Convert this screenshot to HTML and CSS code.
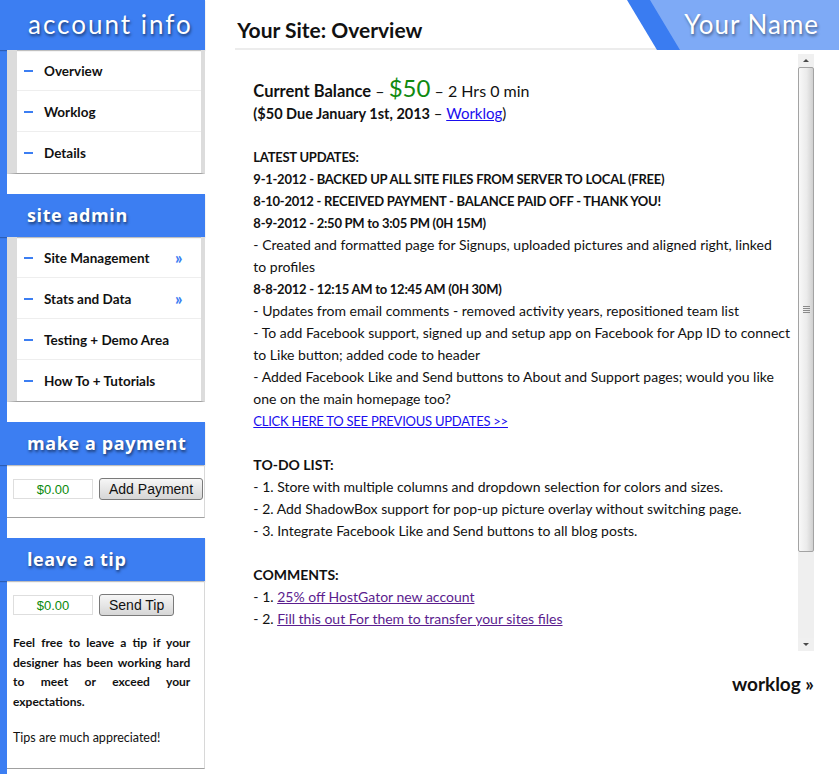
FILE: index.html
```html
<!DOCTYPE html>
<html>
<head>
<meta charset="utf-8">
<title>Your Site: Overview</title>
<link rel="stylesheet" href="styles.css">
</head>
<body>
<div class="page">
  <aside class="sidebar">
    <h2 class="side-head side-head-thin">account info</h2>
    <ul class="nav">
      <li><span class="dash"></span>Overview</li>
      <li><span class="dash"></span>Worklog</li>
      <li><span class="dash"></span>Details</li>
    </ul>

    <h2 class="side-head">site admin</h2>
    <ul class="nav">
      <li><span class="dash"></span>Site Management<span class="more">»</span></li>
      <li><span class="dash"></span>Stats and Data<span class="more">»</span></li>
      <li><span class="dash"></span>Testing + Demo Area</li>
      <li><span class="dash"></span>How To + Tutorials</li>
    </ul>

    <h2 class="side-head">make a payment</h2>
    <div class="side-box">
      <div class="pay-row">
        <input class="amount" type="text" value="$0.00">
        <button class="btn">Add Payment</button>
      </div>
    </div>

    <h2 class="side-head">leave a tip</h2>
    <div class="side-box tip-box">
      <div class="pay-row">
        <input class="amount" type="text" value="$0.00">
        <button class="btn">Send Tip</button>
      </div>
      <p class="tip-text">Feel free to leave a tip if your designer has been working hard to meet or exceed your expectations.</p>
      <p class="tip-thanks">Tips are much appreciated!</p>
    </div>
  </aside>

  <main class="main">
    <header class="top">
      <h1 class="title">Your Site: Overview</h1>
      <div class="banner">
        <div class="banner-inner"><span>Your Name</span></div>
      </div>
    </header>

    <div class="scroll">
      <div class="content">
        <p class="balance"><b>Current Balance</b> – <span class="money">$50</span> – 2 Hrs 0 min</p>
        <p class="due"><b>($50 Due January 1st, 2013</b> – <a href="#" class="link">Worklog</a>)</p>
        <p>&nbsp;</p>
        <p><b>LATEST UPDATES:</b></p>
        <p><b>9-1-2012 - BACKED UP ALL SITE FILES FROM SERVER TO LOCAL (FREE)</b></p>
        <p><b>8-10-2012 - RECEIVED PAYMENT - BALANCE PAID OFF - THANK YOU!</b></p>
        <p><b>8-9-2012 - 2:50 PM to 3:05 PM (0H 15M)</b></p>
        <p>- Created and formatted page for Signups, uploaded pictures and aligned right, linked<br>to profiles</p>
        <p><b>8-8-2012 - 12:15 AM to 12:45 AM (0H 30M)</b></p>
        <p>- Updates from email comments - removed activity years, repositioned team list</p>
        <p>- To add Facebook support, signed up and setup app on Facebook for App ID to connect<br>to Like button; added code to header</p>
        <p>- Added Facebook Like and Send buttons to About and Support pages; would you like<br>one on the main homepage too?</p>
        <p><a href="#" class="link caps-link">CLICK HERE TO SEE PREVIOUS UPDATES &gt;&gt;</a></p>
        <p>&nbsp;</p>
        <p><b class="wide">TO-DO LIST:</b></p>
        <p>- 1. Store with multiple columns and dropdown selection for colors and sizes.</p>
        <p>- 2. Add ShadowBox support for pop-up picture overlay without switching page.</p>
        <p>- 3. Integrate Facebook Like and Send buttons to all blog posts.</p>
        <p>&nbsp;</p>
        <p><b class="wide">COMMENTS:</b></p>
        <p>- 1. <a href="#" class="visited">25% off HostGator new account</a></p>
        <p>- 2. <a href="#" class="visited">Fill this out For them to transfer your sites files</a></p>
      </div>
      <div class="scrollbar" aria-hidden="true">
        <div class="sb-btn sb-up"><span class="tri-up"></span></div>
        <div class="sb-thumb"><span class="grip"></span></div>
        <div class="sb-track"></div>
        <div class="sb-btn sb-down"><span class="tri-down"></span></div>
      </div>
    </div>

    <div class="more-link">worklog »</div>
  </main>
</div>
</body>
</html>
```

FILE: styles.css
```css
html, body {
  margin: 0;
  padding: 0;
  background: #ffffff;
}

body {
  font-family: "Lato", "Open Sans", sans-serif;
  color: #111;
  width: 839px;
  height: 774px;
  overflow: hidden;
}

.page {
  display: flex;
  height: 774px;
}

/* ---------- sidebar ---------- */
.sidebar {
  width: 200px;
  border-left: 7px solid #3c7ef2;
  display: flex;
  flex-direction: column;
}

.side-head {
  margin: 0 0 0 -7px;
  height: 43px;
  line-height: 43px;
  padding-left: 27px;
  background: #3c7ef2;
  color: #fff;
  font-family: "Open Sans", "DejaVu Sans", sans-serif;
  font-weight: 700;
  font-size: 18px;
  letter-spacing: 0.6px;
  text-shadow: 1px 2px 3px rgba(0, 0, 0, 0.55);
  box-shadow: 0 1px 1px rgba(0, 0, 0, 0.25);
}

.side-head-thin {
  height: 50px;
  line-height: 48px;
  padding-left: 28px;
  font-family: "Lato", sans-serif;
  font-weight: 400;
  font-size: 26px;
  letter-spacing: 2px;
}

.nav {
  list-style: none;
  margin: 0 0 20px 0;
  padding: 0;
  border-left: 10px solid #dcdcdc;
  border-right: 4px solid #dcdcdc;
  border-bottom: 1px solid #a0a0a0;
}

.nav li {
  height: 39px;
  padding-top: 1px;
  display: flex;
  align-items: center;
  border-bottom: 1px solid #eeeeee;
  font-family: "Lato", sans-serif;
  font-weight: 700;
  font-size: 13.5px;
  color: #111;
}

.nav li:last-child {
  border-bottom: 0;
  height: 40px;
}

.dash {
  width: 9px;
  height: 2px;
  background: #3c7ef2;
  margin: 0 11px 0 7px;
}

.more {
  margin-left: auto;
  margin-right: 19px;
  color: #3c7ef2;
  font-size: 16px;
  font-weight: 900;
}

.side-box {
  border-right: 1px solid #d8d8d8;
  border-bottom: 1px solid #a0a0a0;
  padding: 13px 0 17px 6px;
  margin-bottom: 20px;
}

.pay-row {
  display: flex;
  align-items: center;
  gap: 6px;
}

.amount {
  width: 80px;
  height: 20px;
  box-sizing: border-box;
  border: 1px solid #dedede;
  padding: 0;
  text-align: center;
  color: #0a8a0a;
  font-family: "Liberation Sans", Arial, sans-serif;
  font-size: 13px;
  background: #fff;
}

.btn {
  height: 22px;
  padding: 0 9px;
  border: 1px solid #7a7a7a;
  border-radius: 3px;
  background: linear-gradient(#f6f6f6, #e6e6e6 50%, #d6d6d6);
  font-family: "Liberation Sans", Arial, sans-serif;
  font-size: 14px;
  color: #111;
}

.tip-box {
  padding-bottom: 21px;
  margin-bottom: 0;
  flex: none;
}

.tip-text {
  margin: 17px 14px 0 0;
  font-family: "Lato", sans-serif;
  font-weight: 700;
  font-size: 12px;
  line-height: 19.6px;
  text-align: justify;
}

.tip-thanks {
  margin: 17px 0 0 0;
  font-family: "Lato", sans-serif;
  font-size: 12.5px;
  line-height: 19px;
}

/* ---------- main ---------- */
.main {
  flex: 1;
  padding: 0 25px 0 30px;
  display: flex;
  flex-direction: column;
}

.top {
  display: flex;
  height: 50px;
  margin-right: -25px;
}

.title {
  flex: 1;
  margin: 0;
  padding: 17px 0 0 2px;
  font-family: "Lato", sans-serif;
  font-weight: 700;
  font-size: 21px;
  color: #111;
  border-bottom: 2px solid #ececec;
  height: 31px;
}

.banner {
  width: 212px;
  height: 50px;
  margin-left: -30px;
  flex: none;
  background: #3a7cf1;
  clip-path: polygon(0 0, 100% 0, 100% 100%, 30px 100%);
  display: flex;
}

.banner-inner {
  flex: 1;
  margin-left: 23px;
  background: #7eaaf6;
  clip-path: polygon(0 0, 100% 0, 100% 100%, 30px 100%);
  display: flex;
  align-items: center;
  justify-content: flex-end;
}

.banner-inner span {
  color: #fff;
  font-family: "Lato", sans-serif;
  font-weight: 400;
  font-size: 26px;
  letter-spacing: 1px;
  margin-right: 20px;
  margin-top: -3px;
  text-shadow: 1px 2px 3px rgba(0, 0, 0, 0.45);
}

.scroll {
  margin-top: 4px;
  margin-left: 3px;
  height: 597px;
  display: flex;
  overflow: hidden;
}

.content {
  flex: 1;
  padding: 26px 8px 0 15px;
  font-family: "Lato", sans-serif;
  font-size: 14px;
  line-height: 22px;
  color: #111;
  overflow: hidden;
}

.content p {
  margin: 0;
  white-space: nowrap;
}

.content b {
  font-size: 13px;
  letter-spacing: -0.25px;
}

.content b.wide {
  font-size: 14px;
  letter-spacing: 0;
}

.balance {
  font-size: 16px;
  line-height: 22px;
}

.content .balance b {
  font-size: 16.5px;
  letter-spacing: 0;
  line-height: 16px;
}

.content .due b {
  font-size: 14.5px;
  letter-spacing: 0;
}

.content p.balance,
.content p.due {
  height: 22px;
}

.due {
  font-size: 15px;
}

.money {
  color: #108a10;
  font-size: 24px;
  font-weight: 400;
  line-height: 16px;
}

.link {
  color: #1a0dee;
  text-decoration: underline;
}

.caps-link {
  font-size: 13px;
  letter-spacing: -0.25px;
}

.visited {
  color: #5b1d8e;
  text-decoration: underline;
}

/* fake scrollbar */
.scrollbar {
  width: 16px;
  flex: none;
  display: flex;
  flex-direction: column;
  background: #efefef;
}

.sb-btn {
  height: 13px;
  flex: none;
  display: flex;
  align-items: center;
  justify-content: center;
  background: #f0f0f0;
}

.tri-up {
  width: 0;
  height: 0;
  border-left: 3px solid transparent;
  border-right: 3px solid transparent;
  border-bottom: 3px solid #4a4a4a;
}

.tri-down {
  width: 0;
  height: 0;
  border-left: 3px solid transparent;
  border-right: 3px solid transparent;
  border-top: 3px solid #4a4a4a;
}

.sb-thumb {
  height: 485px;
  flex: none;
  box-sizing: border-box;
  border: 1px solid #a3a3a3;
  border-radius: 2px;
  background: linear-gradient(to right, #f8f8f8, #ebebeb 55%, #d0d0d0);
  display: flex;
  align-items: center;
  justify-content: center;
}

.grip {
  width: 7px;
  height: 7px;
  background: repeating-linear-gradient(#8a8a8a 0, #8a8a8a 1px, transparent 1px, transparent 2px);
}

.sb-track {
  flex: 1;
  background: #efefef;
}

.more-link {
  align-self: flex-end;
  margin-top: 21px;
  font-family: "Lato", sans-serif;
  font-weight: 700;
  font-size: 19px;
  color: #111;
}
```
